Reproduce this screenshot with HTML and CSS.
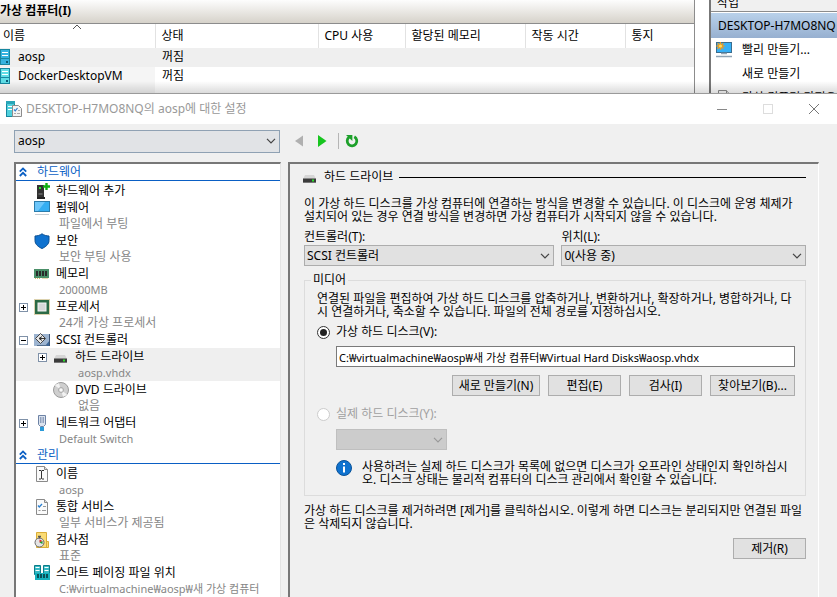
FILE: index.html
```html
<!DOCTYPE html>
<html lang="ko">
<head>
    <meta charset="UTF-8">
    <title>DESKTOP-H7MO8NQ의 aosp에 대한 설정</title>
    <link rel="stylesheet" href="styles.css">
</head>
<body>
    <!-- 공용 아이콘 -->
    <svg class="defs" aria-hidden="true">
        <symbol id="i-server" viewBox="0 0 10 16">
            <rect x="0.5" y="0.5" width="9" height="15" fill="currentColor" stroke="#1787a0"/>
            <path d="M2 3.5h6M2 6.5h6" stroke="#fff"/>
            <path d="M1 9.5h8" stroke="#1787a0"/>
            <rect x="6" y="12" width="2" height="2" fill="#0b5c78"/>
        </symbol>
        <symbol id="i-chevron" viewBox="0 0 10 6">
            <path d="M1 0.8L5 4.8L9 0.8" fill="none" stroke="currentColor" stroke-width="1.2"/>
        </symbol>
        <symbol id="i-collapse" viewBox="0 0 8 10">
            <path d="M0.8 4.6L4 1.4L7.2 4.6M0.8 9L4 5.8L7.2 9" fill="none" stroke="#0a5fc4" stroke-width="1.8"/>
        </symbol>
        <symbol id="i-plus" viewBox="0 0 9 9">
            <rect x="0.5" y="0.5" width="8" height="8" fill="#fff" stroke="#7f91a8"/>
            <path d="M2 4.5h5M4.5 2v5" stroke="#000"/>
        </symbol>
        <symbol id="i-minus" viewBox="0 0 9 9">
            <rect x="0.5" y="0.5" width="8" height="8" fill="#fff" stroke="#7f91a8"/>
            <path d="M2 4.5h5" stroke="#000"/>
        </symbol>
        <symbol id="i-drive" viewBox="0 0 16 16">
            <path d="M3 6h9l2 4H1z" fill="#d6d6d6"/>
            <rect x="1" y="9.500" width="13" height="4" fill="#3b3b3b"/>
            <rect x="1" y="13" width="13" height="1" fill="#777"/>
            <rect x="10" y="10.500" width="2" height="2" fill="#2be02b"/>
        </symbol>
        <symbol id="i-page" viewBox="0 0 16 16">
            <path d="M2.5 0.5h8l3 3v12h-11z" fill="#fafafa" stroke="#8a8a8a"/>
            <path d="M10.5 0.5v3h3" fill="#ddd" stroke="#8a8a8a"/>
        </symbol>
    </svg>

    <!-- 관리자 창 -->
    <div class="manager">
        <section class="vm-list">
            <h2 class="vm-title">가상 컴퓨터(I)</h2>
            <table class="vm-table">
                <colgroup>
                    <col class="col-name"><col class="col-state"><col class="col-cpu"><col class="col-mem"><col class="col-time"><col>
                </colgroup>
                <thead>
                    <tr>
                        <th class="sorted">이름<svg class="sort" viewBox="0 0 10 6"><path d="M1 5L5 1L9 5" fill="none" stroke="#555"/></svg></th>
                        <th>상태</th><th>CPU 사용</th><th>할당된 메모리</th><th>작동 시간</th><th>통지</th>
                    </tr>
                </thead>
                <tbody>
                    <tr class="selected">
                        <td><span class="vm-name"><svg class="vm-icon vm-icon-dark"><use href="#i-server"/></svg>aosp</span></td>
                        <td>꺼짐</td><td></td><td></td><td></td><td></td>
                    </tr>
                    <tr>
                        <td><span class="vm-name"><svg class="vm-icon"><use href="#i-server"/></svg>DockerDesktopVM</span></td>
                        <td>꺼짐</td><td></td><td></td><td></td><td></td>
                    </tr>
                    <tr><td></td><td></td><td></td><td></td><td></td><td></td></tr>
                </tbody>
            </table>
        </section>
        <aside class="actions">
            <h2 class="actions-title">작업</h2>
            <div class="actions-host">DESKTOP-H7MO8NQ</div>
            <a class="action" href="#">
                <svg class="icon" viewBox="0 0 16 16">
                    <rect x="0.5" y="0.5" width="15" height="10" fill="#38b0f5" stroke="#3a6d8f"/>
                    <path d="M5 11.5h6M0 14.5h16" stroke="#8fa3b3" stroke-width="1.6"/>
                    <path d="M4.5 0v8M0.5 4h8M1.6 1.2l5.8 5.6M7.4 1.2L1.6 6.8" stroke="#f09a1a" stroke-width="1.3"/>
                    <circle cx="4.5" cy="4" r="1.6" fill="#ffd85a"/>
                </svg>
                <span>빨리 만들기...</span>
            </a>
            <a class="action" href="#"><span class="icon"></span><span>새로 만들기</span></a>
            <a class="action" href="#"><svg class="icon"><use href="#i-page"/></svg><span>가상 컴퓨터 가져오기...</span></a>
        </aside>
    </div>

    <!-- 설정 창 -->
    <main class="dialog">
        <header class="titlebar">
            <svg class="icon" viewBox="0 0 16 16">
                <rect x="0.5" y="0.5" width="8" height="15" fill="#4fd0dc" stroke="#1787a0"/>
                <rect x="0" y="0" width="9" height="3" fill="#2aa5b8"/>
                <path d="M2 5.5h5M2 8.5h4" stroke="#fff"/>
                <path d="M6.5 4.5h6l3 3v8h-9z" fill="#f4f4f4" stroke="#8c8c8c"/>
                <path d="M8 8.5l1.3 1.3L11.5 7" fill="none" stroke="#2a7fd0" stroke-width="1.2"/>
                <path d="M8 12.5h2M11 12.5h3M12 9.5h2" stroke="#aaa"/>
            </svg>
            <h1 class="title">DESKTOP-H7MO8NQ의 aosp에 대한 설정</h1>
            <button class="win-btn" aria-label="최소화"><svg viewBox="0 0 10 10"><path d="M0 5.5h10" stroke="#888"/></svg></button>
            <button class="win-btn" aria-label="최대화" disabled><svg viewBox="0 0 10 10"><rect x="0.5" y="0.5" width="9" height="9" fill="none" stroke="#ddd"/></svg></button>
            <button class="win-btn" aria-label="닫기"><svg viewBox="0 0 10 10"><path d="M0 0L10 10M10 0L0 10" stroke="#777"/></svg></button>
        </header>

        <div class="toolbar">
            <div class="combo combo-vm">
                <select aria-label="가상 컴퓨터"><option>aosp</option></select>
                <svg class="chevron"><use href="#i-chevron"/></svg>
            </div>
            <button class="tool" aria-label="이전" disabled><svg viewBox="0 0 14 14"><path d="M11 1.5v11L3 7z" fill="#b0b0b0"/></svg></button>
            <button class="tool" aria-label="다음"><svg viewBox="0 0 14 14"><path d="M3 1v12L11.500 7z" fill="#17c51f"/></svg></button>
            <span class="tool-sep"></span>
            <button class="tool" aria-label="새로 고침"><svg viewBox="0 0 14 14"><path d="M9.3 2.8a4.8 4.8 0 1 1-5.2.4" fill="none" stroke="#1da02a" stroke-width="2.8"/><path d="M1 1h6.4v6z" fill="#1da02a"/></svg></button>
        </div>

        <div class="panes">
            <nav class="tree">
                <h2 class="tree-head"><svg><use href="#i-collapse"/></svg>하드웨어</h2>
                <ul>
                    <li class="node">
                        <span class="exp"></span>
                        <svg class="icon" viewBox="0 0 16 16">
                            <rect x="3" y="2" width="7" height="12" fill="#333"/>
                            <path d="M4.5 11h4" stroke="#888"/>
                            <rect x="3" y="14" width="8" height="2" fill="#222"/>
                            <rect x="5" y="4" width="2" height="2" fill="#2be02b"/>
                            <path d="M12.5 0v7M9 3.5h7" stroke="#12b012" stroke-width="2.4"/>
                        </svg>
                        <span class="name">하드웨어 추가</span>
                    </li>
                    <li class="node">
                        <span class="exp"></span>
                        <svg class="icon" viewBox="0 0 16 16">
                            <rect x="0.5" y="1.5" width="15" height="10" fill="#35aef2" stroke="#2b7cab"/>
                            <path d="M1 2h10L4 11H1z" fill="#6cc6fa"/>
                            <path d="M1 14.5h14" stroke="#c5ccd2"/>
                        </svg>
                        <span class="name">펌웨어</span><span class="sub">파일에서 부팅</span>
                    </li>
                    <li class="node">
                        <span class="exp"></span>
                        <svg class="icon" viewBox="0 0 16 16"><path d="M8 0.8C10 2.2 12.5 3 15 3v4.5c0 3.8-3.4 6.5-7 8-3.6-1.5-7-4.2-7-8V3c2.5 0 5-.8 7-2.2z" fill="#0f72cf" stroke="#0a4f92"/></svg>
                        <span class="name">보안</span><span class="sub">보안 부팅 사용</span>
                    </li>
                    <li class="node">
                        <span class="exp"></span>
                        <svg class="icon" viewBox="0 0 16 16">
                            <rect x="0" y="3" width="15" height="9" fill="#4a8f68"/>
                            <path d="M2 5h2v5h-2zM5 5h2v5h-2zM8 5h2v5h-2zM11 5h2v5h-2z" fill="#2b2b2b"/>
                            <path d="M1 12.5h6M8.5 12.5h5.5" stroke="#d5b765" stroke-dasharray="1 1"/>
                        </svg>
                        <span class="name">메모리</span><span class="sub latin">20000MB</span>
                    </li>
                    <li class="node">
                        <svg class="exp"><use href="#i-plus"/></svg>
                        <svg class="icon" viewBox="0 0 16 16">
                            <rect x="0.5" y="0.5" width="15" height="15" fill="none" stroke="#b8a45c" stroke-dasharray="1 1"/>
                            <rect x="1" y="1" width="14" height="14" fill="#2b6a45"/>
                            <rect x="4" y="4" width="8" height="8" fill="#d8d8d8" stroke="#f4f4f4"/>
                        </svg>
                        <span class="name">프로세서</span><span class="sub">24개 가상 프로세서</span>
                    </li>
                    <li class="node">
                        <svg class="exp"><use href="#i-minus"/></svg>
                        <svg class="icon" viewBox="0 0 16 16">
                            <rect x="0" y="2" width="16" height="12" fill="#9db4d0"/>
                            <path d="M11 14l5-6v6z" fill="#3d6798"/>
                            <path d="M6.5 1.5l5 5-5 5-5-5z" fill="#e8e8e8" stroke="#444"/>
                            <path d="M8 4.5L5 6.5l3 2M5 6.5h6" fill="none" stroke="#333"/>
                            <path d="M3 13.5h10" stroke="#55708f"/>
                            <path d="M15.5 2v12" stroke="#3d5575"/>
                        </svg>
                        <span class="name">SCSI 컨트롤러</span>
                    </li>
                    <li class="node child selected">
                        <svg class="exp"><use href="#i-plus"/></svg>
                        <svg class="icon"><use href="#i-drive"/></svg>
                        <span class="name">하드 드라이브</span><span class="sub latin">aosp.vhdx</span>
                    </li>
                    <li class="node child">
                        <span class="exp"></span>
                        <svg class="icon" viewBox="0 0 16 16">
                            <circle cx="8" cy="8" r="7.5" fill="#cfcfcf" stroke="#9b9b9b"/>
                            <path d="M8 8L2 3.5A7 7 0 0 1 6 1.2zM8 8l6 4.5a7 7 0 0 1-4 2.3z" fill="#f2f2f2"/>
                            <circle cx="8" cy="8" r="2.5" fill="#e8e8e8" stroke="#aaa"/>
                            <circle cx="8" cy="8" r="1" fill="#fff"/>
                        </svg>
                        <span class="name">DVD 드라이브</span><span class="sub">없음</span>
                    </li>
                    <li class="node">
                        <svg class="exp"><use href="#i-plus"/></svg>
                        <svg class="icon" viewBox="0 0 16 16">
                            <path d="M4.5 0.5h7v9l-2 2h-3l-2-2z" fill="#dbe3ee" stroke="#6d82a5"/>
                            <path d="M6.5 2v6M8 2v6M9.5 2v6" stroke="#7e90b0" stroke-width="0.8"/>
                            <rect x="6" y="12" width="4" height="4" fill="#2a9ad8"/>
                        </svg>
                        <span class="name">네트워크 어댑터</span><span class="sub latin">Default Switch</span>
                    </li>
                </ul>
                <h2 class="tree-head"><svg><use href="#i-collapse"/></svg>관리</h2>
                <ul>
                    <li class="node">
                        <span class="exp"></span>
                        <svg class="icon" viewBox="0 0 16 16"><use href="#i-page"/><path d="M5 4.5h2l.5.5.5-.5h2M5 13h2l.5-.5.5.5h2M7.5 5v7.5" fill="none" stroke="#333"/></svg>
                        <span class="name">이름</span><span class="sub latin">aosp</span>
                    </li>
                    <li class="node">
                        <span class="exp"></span>
                        <svg class="icon" viewBox="0 0 16 16"><use href="#i-page"/><path d="M4 6.5l1.3 1.5L8 5" fill="none" stroke="#2a7fd0" stroke-width="1.3"/><path d="M9 7.5h3M8 11.5h4M4.5 11.5h2" stroke="#999"/></svg>
                        <span class="name">통합 서비스</span><span class="sub">일부 서비스가 제공됨</span>
                    </li>
                    <li class="node">
                        <span class="exp"></span>
                        <svg class="icon" viewBox="0 0 16 16">
                            <path d="M2.5 0.5h10v9h2v6h-12z" fill="#fadb74" stroke="#d9ac38"/>
                            <path d="M12.5 9v6" stroke="#d9ac38"/>
                            <circle cx="5.5" cy="10.5" r="4.5" fill="#e4e4e4" stroke="#6b6b6b"/>
                            <path d="M4 4.5h3M5.5 5v1.5" stroke="#555" stroke-width="1.4"/>
                            <path d="M5.5 10.5V7.5l3 1.5z" fill="#d22"/>
                            <path d="M5.5 10.5l3-1.5v3z" fill="#1a9a2a"/>
                        </svg>
                        <span class="name">검사점</span><span class="sub">표준</span>
                    </li>
                    <li class="node">
                        <span class="exp"></span>
                        <svg class="icon" viewBox="0 0 16 16">
                            <path d="M0.5 0.5h6v9h-6zM9.5 0.5h6v9h-6z" fill="#35b9c4" stroke="#0d7c88"/>
                            <path d="M1.5 2.5h4M1.5 5.5h4M10.5 2.5h4M10.5 5.5h4" stroke="#fff"/>
                            <rect x="1" y="8" width="15" height="7" fill="#14b0bd"/>
                            <path d="M3 9h2v4h-2zM6 9h2v4h-2zM9 9h2v4h-2zM12 9h2v4h-2z" fill="#0a4f58"/>
                        </svg>
                        <span class="name">스마트 페이징 파일 위치</span><span class="sub latin">C:₩virtualmachine₩aosp₩새 가상 컴퓨터</span>
                    </li>
                </ul>
            </nav>

            <section class="detail">
                <h2 class="detail-head"><svg class="icon"><use href="#i-drive"/></svg><span>하드 드라이브</span></h2>
                <p class="text">이 가상 하드 디스크를 가상 컴퓨터에 연결하는 방식을 변경할 수 있습니다. 이 디스크에 운영 체제가<br>설치되어 있는 경우 연결 방식을 변경하면 가상 컴퓨터가 시작되지 않을 수 있습니다.</p>

                <div class="fields">
                    <div>
                        <label for="controller">컨트롤러(T):</label>
                        <div class="combo">
                            <select id="controller"><option>SCSI 컨트롤러</option></select>
                            <svg class="chevron"><use href="#i-chevron"/></svg>
                        </div>
                    </div>
                    <div>
                        <label for="location">위치(L):</label>
                        <div class="combo">
                            <select id="location"><option>0(사용 중)</option></select>
                            <svg class="chevron"><use href="#i-chevron"/></svg>
                        </div>
                    </div>
                </div>

                <fieldset class="media">
                    <legend>미디어</legend>
                    <p class="text">연결된 파일을 편집하여 가상 하드 디스크를 압축하거나, 변환하거나, 확장하거나, 병합하거나, 다<br>시 연결하거나, 축소할 수 있습니다. 파일의 전체 경로를 지정하십시오.</p>
                    <div class="radio-row">
                        <input type="radio" id="virtual" name="disk" checked>
                        <label for="virtual">가상 하드 디스크(V):</label>
                    </div>
                    <div class="indent">
                        <input class="path latin" type="text" aria-label="가상 하드 디스크 경로" value="C:₩virtualmachine₩aosp₩새 가상 컴퓨터₩Virtual Hard Disks₩aosp.vhdx">
                        <div class="buttons">
                            <button class="btn btn-new">새로 만들기(N)</button>
                            <button class="btn">편집(E)</button>
                            <button class="btn">검사(I)</button>
                            <button class="btn btn-browse">찾아보기(B)...</button>
                        </div>
                    </div>
                    <div class="radio-row disabled">
                        <input type="radio" id="physical" name="disk" disabled>
                        <label for="physical">실제 하드 디스크(Y):</label>
                    </div>
                    <div class="indent">
                        <div class="combo combo-disk">
                            <select aria-label="실제 하드 디스크" disabled></select>
                            <svg class="chevron"><use href="#i-chevron"/></svg>
                        </div>
                        <div class="info">
                            <svg class="icon" viewBox="0 0 16 16"><circle cx="8" cy="8" r="7.5" fill="#0f72cf" stroke="#0a5299"/><path d="M8 3v2M8 6.5v6" stroke="#fff" stroke-width="2"/></svg>
                            <p class="text">사용하려는 실제 하드 디스크가 목록에 없으면 디스크가 오프라인 상태인지 확인하십시<br>오. 디스크 상태는 물리적 컴퓨터의 디스크 관리에서 확인할 수 있습니다.</p>
                        </div>
                    </div>
                </fieldset>

                <p class="text">가상 하드 디스크를 제거하려면 [제거]를 클릭하십시오. 이렇게 하면 디스크는 분리되지만 연결된 파일<br>은 삭제되지 않습니다.</p>
                <div class="remove"><button class="btn">제거(R)</button></div>
            </section>
        </div>
    </main>
</body>
</html>
```
FILE: styles.css
```css
* {
    box-sizing: border-box;
}
body {
    margin: 0;
    height: 100vh;
    display: flex;
    flex-direction: column;
    overflow: hidden;
    background: #f0f0f0;
    color: #000;
    font-family: "Noto Sans", "Noto Sans CJK KR", sans-serif;
    font-size: 12px;
    line-height: 16px;
}
h1, h2, p, ul {
    margin: 0;
    padding: 0;
    font-size: 12px;
    font-weight: normal;
}
button, input, select {
    font: inherit;
    color: inherit;
    margin: 0;
}
svg {
    display: block;
}
.defs {
    display: none;
}
.icon {
    width: 16px;
    height: 16px;
    flex: none;
}
.latin {
    font-size: 11px;
}

/* 관리자 창 */
.manager {
    position: relative;
    flex: none;
    display: flex;
    height: 93px;
    overflow: hidden;
    background: #fff;
}
.manager::after {
    content: "";
    position: absolute;
    inset: auto 0 0;
    height: 12px;
    background: linear-gradient(rgba(0, 0, 0, 0), rgba(0, 0, 0, 0.14));
}
.vm-list {
    flex: 1;
    min-width: 0;
    border-right: 1px solid #8c8c8c;
}
.vm-title {
    height: 24px;
    line-height: 21px;
    font-weight: bold;
    border-bottom: 1px solid #8c8c8c;
    background: linear-gradient(#fdfdfd, #d6d2ca);
}
.vm-table {
    width: 100%;
    table-layout: fixed;
    border-collapse: collapse;
}
.vm-table th {
    height: 24px;
    padding: 0 6px;
    font-weight: normal;
    text-align: left;
    border-right: 1px solid #e2e2e2;
}
.vm-table th:last-child {
    border-right: 0;
}
.vm-table th:first-child {
    padding-left: 3px;
}
.vm-table td {
    height: 19px;
    padding: 0 7px 2px;
}
.vm-table td:first-child {
    padding: 0 0 2px;
    background: #f5f5f5;
}
.vm-table .selected td {
    background: #efefef;
}
.col-name { width: 155px; }
.col-state { width: 163px; }
.col-cpu { width: 87px; }
.col-mem { width: 120px; }
.col-time { width: 100px; }
.sorted {
    position: relative;
}
.sort {
    position: absolute;
    top: 0;
    left: 72px;
    width: 10px;
    height: 6px;
}
.vm-name {
    display: flex;
    align-items: center;
    gap: 8px;
}
.vm-icon {
    width: 10px;
    height: 16px;
    color: #5fdde6;
}
.vm-icon-dark {
    color: #35b3e0;
}
.actions {
    width: 128px;
    margin-left: 14px;
    border-left: 2px solid #777;
    white-space: nowrap;
    overflow: hidden;
}
.actions-title {
    display: flex;
    align-items: flex-end;
    height: 12px;
    padding-left: 6px;
    line-height: 16px;
    background: #f0f0f0;
    border-bottom: 1px solid #8c8c8c;
}
.actions-host {
    height: 25px;
    margin-top: 1px;
    padding-left: 7px;
    line-height: 25px;
    background: linear-gradient(#b9d1ea, #97b0d0);
}
.action {
    display: flex;
    align-items: center;
    gap: 10px;
    height: 24px;
    padding-left: 5px;
    color: #000;
    text-decoration: none;
}

/* 설정 창 */
.dialog {
    flex: 1;
    min-height: 0;
    display: flex;
    flex-direction: column;
    border-top: 1px solid #9a9a9a;
}
.titlebar {
    display: flex;
    align-items: center;
    height: 30px;
    padding-left: 6px;
    background: #fff;
    color: #999;
}
.title {
    flex: 1;
    padding-left: 4px;
}
.win-btn {
    display: flex;
    justify-content: center;
    width: 46px;
    padding: 0;
    border: 0;
    background: none;
}
.win-btn svg {
    width: 10px;
    height: 10px;
}
.toolbar {
    display: flex;
    align-items: center;
    height: 38px;
    padding: 0 14px 4px;
}
.combo {
    display: grid;
    align-items: center;
}
.combo select, .combo .chevron {
    grid-area: 1 / 1;
}
.combo select {
    width: 100%;
    height: 21px;
    padding: 0 2px;
    appearance: none;
    border: 1px solid #adadad;
    border-radius: 0;
    background: #e1e1e1;
    opacity: 1;
}
.combo .chevron {
    justify-self: end;
    width: 10px;
    height: 6px;
    margin-right: 4px;
    color: #444;
    pointer-events: none;
}
.combo-vm {
    width: 266px;
    margin-right: 12px;
}
.combo-vm select {
    height: 23px;
    padding: 0 3px;
    border-color: #8fa1b3;
    background: #e1e3e6;
}
.tool {
    width: 14px;
    height: 14px;
    margin-right: 9px;
    padding: 0;
    border: 0;
    background: none;
}
.tool-sep {
    width: 1px;
    height: 16px;
    margin-right: 6px;
    background: #b5b5b5;
}
.panes {
    flex: 1;
    min-height: 0;
    display: flex;
    gap: 7px;
    padding: 0 18px 0 14px;
}

/* 왼쪽 트리 */
.tree {
    flex: none;
    width: 267px;
    overflow: hidden;
    background: #fff;
    border-top: 2px solid #777;
    border-left: 2px solid #777;
    border-right: 1px solid #e3e3e3;
}
.tree ul {
    list-style: none;
    padding-top: 1px;
}
.tree-head {
    display: flex;
    align-items: center;
    gap: 10px;
    height: 17px;
    padding-left: 3px;
    color: #0a5fc4;
    border-bottom: 1px solid #0a5fc4;
}
.tree-head svg {
    width: 8px;
    height: 10px;
}
.node {
    display: grid;
    grid-template-columns: 9px 16px 1fr;
    column-gap: 6px;
    padding: 1px 0 0 3px;
    white-space: nowrap;
}
.node .exp {
    width: 9px;
    height: 9px;
    margin-top: 4px;
}
.node .icon {
    grid-row: span 2;
}
.node .sub {
    grid-column: 3;
    padding-left: 3px;
    color: #868686;
}
.child {
    padding-left: 22px;
}
.node.selected {
    background: #efefef;
}

/* 오른쪽 내용 */
.detail {
    flex: 1;
    min-width: 0;
    padding: 5px 12px 0 14px;
    border-top: 2px solid #777;
    border-left: 2px solid #777;
    border-right: 1px solid #fff;
}
.detail-head {
    display: flex;
    align-items: center;
    gap: 6px;
    margin-left: -2px;
    margin-bottom: 12px;
}
.detail-head::after {
    content: "";
    flex: 1;
    height: 1px;
    background: #000;
}
.text {
    line-height: 13px;
    white-space: nowrap;
}
.fields {
    display: grid;
    grid-template-columns: 251fr 245fr;
    gap: 7px;
    margin-top: 6px;
}
.fields label {
    display: block;
}
.media {
    min-width: 0;
    margin: 6px 0 8px;
    padding: 4px 10px 9px 12px;
    border: 1px solid #dcdcdc;
}
.media legend {
    margin-left: -6px;
    padding: 0 2px;
}
.radio-row {
    display: flex;
    align-items: center;
    gap: 6px;
    margin-top: 6px;
}
.radio-row input {
    width: 13px;
    height: 13px;
    display: grid;
    place-items: center;
    appearance: none;
    border: 1px solid #333;
    border-radius: 50%;
    background: #fff;
}
.radio-row input:checked::before {
    content: "";
    width: 7px;
    height: 7px;
    border-radius: 50%;
    background: #222;
}
.radio-row.disabled {
    color: #a0a0a0;
}
.radio-row.disabled input {
    border-color: #ccc;
}
.indent {
    padding-left: 19px;
}
.path {
    width: 100%;
    height: 21px;
    margin-top: 6px;
    padding: 0 2px;
    border: 1px solid #7a7a7a;
    background: #fff;
}
.buttons {
    display: flex;
    justify-content: flex-end;
    gap: 8px;
    margin: 8px 0 10px;
}
.btn {
    width: 73px;
    height: 21px;
    padding: 0;
    border: 1px solid #adadad;
    background: #e1e1e1;
    white-space: nowrap;
}
.btn-new {
    width: 88px;
}
.btn-browse {
    width: 85px;
}
.combo-disk {
    width: 111px;
    margin-top: 7px;
}
.combo-disk select {
    border-color: #bfbfbf;
    background: #ccc;
}
.combo-disk .chevron {
    color: #999;
}
.info {
    display: flex;
    gap: 10px;
    margin-top: 10px;
}
.remove {
    display: flex;
    justify-content: flex-end;
    margin-top: 8px;
}
```
